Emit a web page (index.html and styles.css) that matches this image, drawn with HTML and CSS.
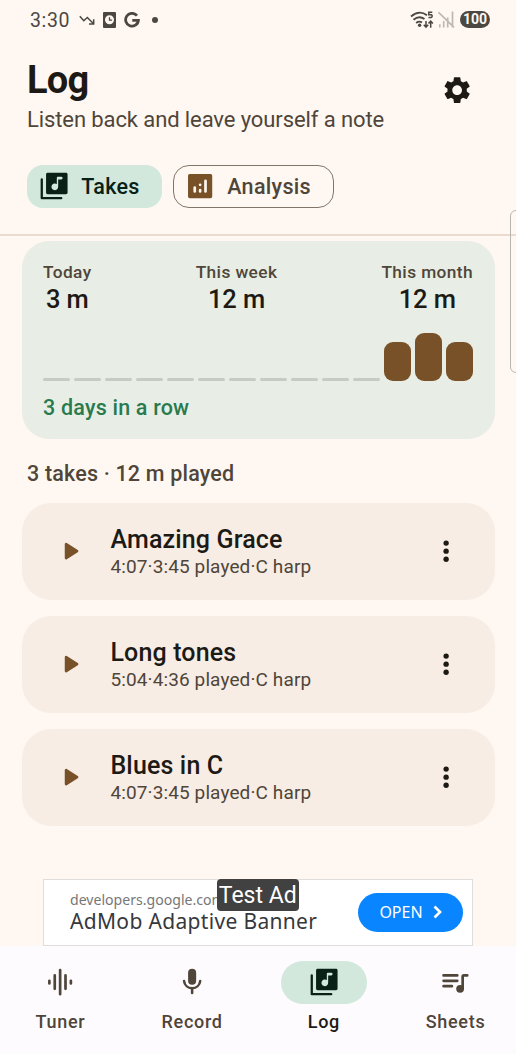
FILE: index.html
```html
<!DOCTYPE html>
<html lang="en">
<head>
<meta charset="utf-8">
<meta name="viewport" content="width=device-width">
<title>Log</title>
<link rel="stylesheet" href="styles.css">
</head>
<body>
<svg class="defs" width="0" height="0" aria-hidden="true">
  <symbol id="library" viewBox="0 0 24 24"><path fill-rule="evenodd" d="M20.8 2H7.2C6.5 2 6 2.500 6 3.200v13.600c0 .7.500 1.200 1.200 1.200h13.600c.7 0 1.200-.5 1.200-1.200V3.200c0-.7-.5-1.200-1.200-1.200zM17.300 7H15v5.500a2.500 2.500 0 1 1-1-2V6c0-.6.4-1 1-1h2.300a1 1 0 0 1 0 2z"/><path d="M2.800 7v14h14.500" fill="none" stroke="currentColor" stroke-width="1.700" stroke-linecap="round" stroke-linejoin="round"/></symbol>
  <symbol id="play" viewBox="0 0 24 24"><path d="M8 6.800v10.400c0 .8.870 1.270 1.540.84l8.140-5.200a1 1 0 0 0 0-1.690L9.540 5.980A1 1 0 0 0 8 6.800z"/></symbol>
  <symbol id="more" viewBox="0 0 24 24"><circle cx="12" cy="6" r="2"/><circle cx="12" cy="12" r="2"/><circle cx="12" cy="18" r="2"/></symbol>
</svg>
<main class="screen">
  <header class="status">
    <span class="clock">3:30</span>
    <svg class="trend" viewBox="0 0 16 12"><path d="M.8 2.200 4.800 6.700 8.300 3.500 14.300 9.500M14.700 5.300V10H10" fill="none" stroke="currentColor" stroke-width="1.500"/></svg>
    <svg class="watch" viewBox="0 0 13 16"><path fill-rule="evenodd" d="M1 0h11q1 0 1 1v14q0 1-1 1H1q-1 0-1-1V1q0-1 1-1zM6.500 3.300a4.500 4.500 0 1 0 0 9 4.500 4.500 0 0 0 0-9z"/><path d="M6.500 5.200v3h2.600" fill="none" stroke="currentColor" stroke-width="1.300"/></svg>
    <svg class="google" viewBox="0 0 16 16"><path d="M13 3.700A6.400 6.400 0 1 0 14.400 8.300H8.300" fill="none" stroke="currentColor" stroke-width="2.800"/></svg>
    <i class="dot"></i>
    <svg class="wifi" viewBox="0 0 24 18"><g fill="none" stroke="currentColor" stroke-width="1.900"><path d="M1 5.500Q9 -1.500 17 4.200M3.500 8.800Q9 4 14.500 8M6.200 11.900Q9 9.600 12 11.500"/></g><circle cx="9.600" cy="14.200" r="1.700"/><path d="M22.300 1.300h-3.500v2.500q3.400-.6 3.400 1.300 0 2-3.700 1.300" fill="none" stroke="currentColor" stroke-width="1.500"/><path d="M16 10v6M13.800 13.800 16 16.200l2.200-2.400M20.700 16.700v-6M18.500 12.600l2.200-2.400 2.200 2.400" fill="none" stroke="currentColor" stroke-width="1.500"/></svg>
    <svg class="signal" viewBox="0 0 17 17"><path d="M1.800 16.500v-3.200M5.700 16.500V10M9.700 16.500V6.500M14.500 16.500V.5M.5 1.300l15.500 15" fill="none" stroke="currentColor" stroke-width="1.700"/></svg>
    <span class="battery">100</span>
  </header>
  <section class="head">
    <div class="titles">
      <h1>Log</h1>
      <p>Listen back and leave yourself a note</p>
    </div>
    <svg class="icon gear" viewBox="0 0 24 24"><path d="M19.140 12.940c.04-.3.060-.61.060-.94 0-.32-.02-.64-.07-.94l2.030-1.580c.18-.14.230-.41.120-.61l-1.920-3.320c-.12-.22-.37-.29-.59-.22l-2.390.96c-.5-.38-1.030-.7-1.620-.94l-.36-2.540c-.04-.24-.24-.41-.48-.41h-3.840c-.24 0-.43.170-.47.410l-.36 2.540c-.59.240-1.130.570-1.620.940l-2.390-.96c-.22-.08-.47 0-.59.220L2.740 8.870c-.12.210-.08.470.120.610l2.030 1.580c-.05.300-.09.630-.09.940s.02.640.070.940l-2.030 1.580c-.18.140-.23.410-.12.610l1.920 3.320c.12.220.370.290.590.220l2.390-.96c.5.380 1.030.700 1.620.940l.36 2.540c.05.240.240.410.480.410h3.840c.24 0 .44-.17.470-.41l.36-2.540c.59-.24 1.130-.56 1.620-.94l2.390.960c.22.080.470 0 .59-.22l1.920-3.320c.12-.22.070-.47-.12-.61l-2.010-1.580zM12 15.600c-1.980 0-3.600-1.620-3.600-3.600s1.620-3.600 3.600-3.600 3.600 1.620 3.600 3.600-1.620 3.600-3.600 3.600z"/></svg>
  </section>
  <nav class="chips">
    <button class="chip selected"><svg class="icon"><use href="#library"/></svg><span>Takes</span></button>
    <button class="chip outlined"><svg class="icon" viewBox="0 0 24 24"><path fill-rule="evenodd" d="M4.200 3h15.600Q21 3 21 4.200v15.600q0 1.200-1.200 1.200H4.200Q3 21 3 19.800V4.200Q3 3 4.200 3zM7 13v3q0 1 1 1t1-1v-3q0-1-1-1t-1 1zM11 15v1q0 1 1 1t1-1v-1q0-1-1-1t-1 1zM11 11a1 1 0 1 0 2 0 1 1 0 0 0-2 0zM15 8v8q0 1 1 1t1-1V8q0-1-1-1t-1 1z"/></svg><span>Analysis</span></button>
  </nav>
  <section class="summary">
    <div class="stats">
      <div><span>Today</span><b>3 m</b></div>
      <div><span>This week</span><b>12 m</b></div>
      <div><span>This month</span><b>12 m</b></div>
    </div>
    <div class="bars">
      <i></i><i></i><i></i><i></i><i></i><i></i><i></i><i></i><i></i><i></i><i></i>
      <i class="day" style="height:39.500px"></i><i class="day" style="height:48.500px"></i><i class="day" style="height:39.500px"></i>
    </div>
    <p class="streak">3 days in a row</p>
  </section>
  <h2>3 takes · 12 m played</h2>
  <section class="takes">
    <article><svg class="icon play"><use href="#play"/></svg><div><h3>Amazing Grace</h3><p>4:07·3:45 played·C harp</p></div><svg class="icon more"><use href="#more"/></svg></article>
    <article><svg class="icon play"><use href="#play"/></svg><div><h3>Long tones</h3><p>5:04·4:36 played·C harp</p></div><svg class="icon more"><use href="#more"/></svg></article>
    <article><svg class="icon play"><use href="#play"/></svg><div><h3>Blues in C</h3><p>4:07·3:45 played·C harp</p></div><svg class="icon more"><use href="#more"/></svg></article>
  </section>
  <aside class="ad">
    <div class="adtext"><span>developers.google.com</span><strong>AdMob Adaptive Banner</strong></div>
    <button>OPEN<svg viewBox="0 0 9 14"><path d="M1.500 1.500 7 7l-5.500 5.500" fill="none" stroke="currentColor" stroke-width="2.700"/></svg></button>
    <em>Test Ad</em>
  </aside>
  <footer class="tabs">
    <a><span class="pill"><svg class="icon" viewBox="0 0 24 24"><path d="M12 3v18M8 7v10M16 7v10M4 11v2M20 11v2" fill="none" stroke="currentColor" stroke-width="2" stroke-linecap="round"/></svg></span>Tuner</a>
    <a><span class="pill"><svg class="icon" viewBox="0 0 24 24"><rect x="9" y="2" width="6" height="12" rx="3"/><path d="M6 11.200c.4 3 2.700 5.300 6 5.300s5.600-2.300 6-5.300M12 16.500V20" fill="none" stroke="currentColor" stroke-width="1.900" stroke-linecap="round"/></svg></span>Record</a>
    <a class="current"><span class="pill"><svg class="icon"><use href="#library"/></svg></span>Log</a>
    <a><span class="pill"><svg class="icon" viewBox="0 0 24 24"><path d="M3.400 7h10.200M3.400 11h10.200M3.400 15h6.200M21 7h-2.500q-.9 0-.9.900V17" fill="none" stroke="currentColor" stroke-width="2" stroke-linecap="round"/><circle cx="15.700" cy="17" r="2.900"/></svg></span>Sheets</a>
  </footer>
  <i class="edge"></i>
</main>
</body>
</html>
```
FILE: styles.css
```css
* { box-sizing: border-box; margin: 0; padding: 0; }
body { background: #fff8f2; font-family: Roboto, sans-serif; }
.defs { display: block; height: 0; }
.screen { position: relative; display: flex; flex-direction: column; width: 516px; height: 1054px; overflow: hidden; color: #1d1a15; background: #fff8f2; }
svg { fill: currentColor; flex: none; }
.icon { width: 32.25px; height: 32.25px; }
button { border: 0; font: inherit; }

.status { display: flex; align-items: center; height: 39px; padding: 0 26px 0 30px; color: #4b4844; }
.clock { width: 49px; padding-top: 1px; font-size: 19.500px; letter-spacing: .6px; }
.trend { width: 16px; height: 12px; margin-right: 8px; }
.watch { width: 13px; height: 16px; margin-right: 8px; }
.google { width: 16px; height: 16px; }
.dot { width: 6px; height: 6px; margin-left: 12px; border-radius: 50%; background: currentColor; }
.wifi { width: 24px; height: 18px; margin-left: auto; }
.signal { width: 17px; height: 17px; margin: 0 5px 0 4px; color: #bcb8b2; }
.battery { width: 30px; height: 17px; border-radius: 9px; background: #4b4844; color: #fff8f2; font-size: 14px; font-weight: 700; line-height: 17.500px; text-align: center; }

.head { display: flex; height: 125.500px; padding: 20px 43px 0 27px; justify-content: space-between; }
h1 { font-size: 38px; font-weight: 700; line-height: 42px; letter-spacing: -.8px; }
.titles p { margin-top: 5px; font-size: 22px; line-height: 28px; letter-spacing: -.1px; color: #4f4539; white-space: nowrap; }
.gear { margin-top: 14.500px; }

.chips { display: flex; gap: 11px; height: 71.500px; padding: 0 27px; border-bottom: 2px solid #ebdbcf; }
.chip { display: flex; align-items: center; height: 43px; border-radius: 16px; font-size: 21.500px; font-weight: 500; letter-spacing: .3px; }
.chip span { margin-left: 11px; }
.selected { width: 135px; padding-left: 11px; background: #d3e8dc; color: #092016; }
.outlined { width: 161px; padding-left: 10px; border: 1.300px solid #81756a; background: none; color: #4f4539; }
.outlined svg { color: #795129; }

.summary { margin: 5px 21.500px 0; height: 197.500px; padding: 19px 21.500px 0; border-radius: 27px; background: #e8eee5; }
.stats { display: flex; justify-content: space-between; }
.stats div { display: flex; flex-direction: column; align-items: center; }
.stats span { font-size: 17.300px; line-height: 24px; letter-spacing: .4px; font-weight: 500; color: #4f4539; }
.stats b { font-size: 25.500px; line-height: 30px; font-weight: 500; letter-spacing: -.1px; }
.bars { display: flex; gap: 4px; align-items: flex-end; height: 67px; }
.bars i { flex: 1; height: 3px; border-radius: 1.500px; background: #c5ccc2; }
.bars .day { border-radius: 9px; background: #785129; }
.streak { margin-top: 13px; font-size: 21.500px; line-height: 28px; letter-spacing: .2px; font-weight: 500; color: #287a4f; }
h2 { margin: 21px 27px 0; font-size: 21.500px; font-weight: 500; line-height: 28px; letter-spacing: .18px; color: #4f4539; }

.takes { display: grid; gap: 16.200px; margin: 15px 21.500px 0; }
article { display: flex; align-items: center; height: 97px; padding-left: 32.200px; border-radius: 29px; background: #f7ede5; }
article div { margin-left: 24.500px; padding-top: 2.500px; flex: 1; }
h3 { font-size: 25px; line-height: 28px; font-weight: 500; letter-spacing: .15px; }
article p { font-size: 19px; line-height: 25px; color: #4f4539; letter-spacing: .12px; }
.play { color: #785129; }
.more { margin-right: 32.500px; }

.ad { position: relative; display: flex; align-items: center; width: 430px; height: 66.500px; margin: 53.300px 0 0 43px; padding: 0 9px 0 26px; border: 1px solid #dfdedc; background: #fff; font-family: "Noto Sans", sans-serif; }
.adtext { display: flex; flex-direction: column; flex: 1; white-space: nowrap; }
.adtext span { font-size: 14.100px; line-height: 19px; color: #777; }
.adtext strong { font-size: 21px; line-height: 25px; letter-spacing: .33px; font-weight: 400; color: #37383b; }
.ad button { display: flex; align-items: center; justify-content: center; gap: 10px; width: 105px; height: 39px; border-radius: 20px; background: #0885ff; color: #fff; font-size: 16px; }
.ad button svg { width: 9px; height: 14px; }
.ad em { position: absolute; left: 172.500px; top: -1px; width: 82.500px; height: 32px; border-radius: 4px; background: #414141; color: #fff; font: 23px/34px Roboto, sans-serif; text-align: center; }

.tabs { display: flex; gap: 10.750px; flex: 1; padding-top: 15px; background: #fefbff; }
.tabs a { flex: 1; display: flex; flex-direction: column; align-items: center; font-size: 18px; line-height: 25px; letter-spacing: .7px; font-weight: 500; color: #4f4539; }
.pill { display: grid; place-items: center; width: 86px; height: 43px; margin-bottom: 5px; border-radius: 22px; }
.current .pill { background: #d3e8dc; color: #092016; }
.tabs .current { color: #1d1a15; }
.edge { position: absolute; left: 510px; top: 209.500px; width: 20px; height: 163px; border: 1.500px solid #b9b5b0; border-radius: 6px; }
```
